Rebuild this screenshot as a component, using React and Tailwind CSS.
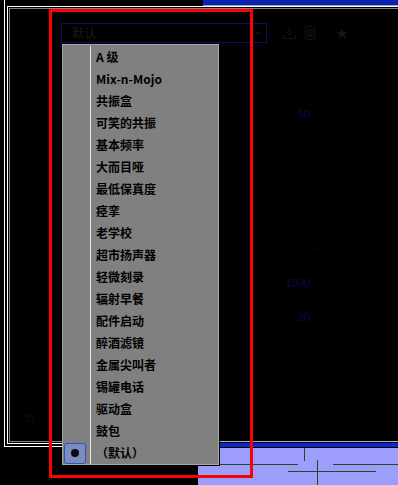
import React from 'react';

const presets = [
  'A 级',
  'Mix-n-Mojo',
  '共振盒',
  '可笑的共振',
  '基本频率',
  '大而目哑',
  '最低保真度',
  '痉挛',
  '老学校',
  '超市扬声器',
  '轻微刻录',
  '辐射早餐',
  '配件启动',
  '醉酒滤镜',
  '金属尖叫者',
  '锡罐电话',
  '驱动盒',
  '鼓包',
  '（默认）',
];

function Chevron({ color = '#2a2a2a' }) {
  return (
    <svg width="7" height="4" viewBox="0 0 7 4" className="block">
      <polyline points="0.5,0.5 3.5,3.5 6.5,0.5" fill="none" stroke={color} strokeWidth="1" />
    </svg>
  );
}

export default function App() {
  return (
    <div className="relative w-[398px] h-[485px] overflow-hidden bg-black font-['Noto_Sans_CJK_SC','Liberation_Sans',sans-serif]">
      {/* title bar of the window behind */}
      <div className="absolute left-[203px] top-0 right-0 h-[6px] bg-[#0b24b0] border-b border-[#9aa0c0]" />

      {/* main window */}
      <div className="absolute left-[4px] top-[-20px] w-[440px] h-[467px] border-l border-b border-white">
        <div className="ml-[2px] mt-[26px] h-[438px] border-l border-t border-b border-white">
          <div className="ml-[1px] mt-[1px] h-[434px] border-l border-t border-b border-[#808080]">
            {/* toolbar */}
            <div className="flex items-center mt-[14px] pl-[51px]">
              <div className="w-[206px] h-[20px] border border-[#0e0e66] flex items-center pl-[10px] pr-[4px]">
                <span className="text-[12px] leading-none text-[#1a1a1a]">默认</span>
                <span className="ml-auto">
                  <Chevron color="#1e1e1e" />
                </span>
              </div>
              <svg width="13" height="12" viewBox="0 0 13 12" className="ml-[16px] block">
                <line x1="6.5" y1="0" x2="6.5" y2="8" stroke="#141414" />
                <polyline points="3.5,5 6.5,8 9.5,5" fill="none" stroke="#141414" />
                <polyline points="0.5,8 0.5,11.5 12.5,11.5 12.5,8" fill="none" stroke="#141414" />
              </svg>
              <svg width="10" height="14" viewBox="0 0 10 14" className="ml-[9px] block">
                <rect x="0.5" y="0.5" width="9" height="13" rx="1" fill="none" stroke="#141414" />
                <line x1="3" y1="3" x2="3" y2="11" stroke="#141414" />
                <line x1="5" y1="3" x2="5" y2="11" stroke="#141414" />
                <line x1="7" y1="3" x2="7" y2="11" stroke="#141414" />
              </svg>
              <svg width="12" height="11" viewBox="0 0 12 11" className="ml-[21px] block">
                <polygon points="6,0 7.5,4 12,4 8.4,6.6 9.7,11 6,8.3 2.3,11 3.6,6.6 0,4 4.5,4" fill="#161616" />
              </svg>
            </div>

            {/* value column */}
            <div className="flex flex-col font-['Liberation_Sans',sans-serif] text-[11px] leading-[14px] text-[#0a0a4c]">
              <div className="mt-[64px] w-[300px] h-[14px] text-right">50</div>
              <div className="mt-[96px] pl-[303px] h-[4px]">
                <Chevron color="#0c0c0c" />
              </div>
              <div className="mt-[26px] pl-[303px] h-[4px]">
                <Chevron color="#0c0c0c" />
              </div>
              <div className="mt-[25px] w-[300px] h-[14px] text-right">1000</div>
              <div className="mt-[20px] w-[300px] h-[14px] text-right">20</div>
              <div className="mt-[87px] pl-[15px] h-[14px] text-[12px] text-[#0e0e0e]">lb</div>
            </div>
          </div>
        </div>
      </div>

      {/* lavender window */}
      <div className="absolute left-[198px] top-[441px] right-0 bottom-0 flex flex-col border-t border-[#b4b4b4]">
        <div className="h-[1px] bg-black" />
        <div className="h-[4px] bg-[#0a2ad0]" />
        <div className="h-[1px] bg-black" />
        <div className="flex-1 bg-[#9d9dfc]">
          <svg width="200" height="37" viewBox="0 0 200 37" className="block">
            <g stroke="#1f4a22" strokeWidth="1">
              <line x1="0" y1="16.5" x2="100" y2="16.5" />
              <line x1="135" y1="16.5" x2="200" y2="16.5" />
              <line x1="106.5" y1="0" x2="106.5" y2="13" />
              <line x1="90" y1="23.5" x2="178" y2="23.5" />
              <line x1="119.5" y1="12" x2="119.5" y2="37" />
            </g>
          </svg>
        </div>
      </div>

      {/* preset menu */}
      <div className="absolute left-[62px] top-[44px] w-[157px] h-[421px] border border-[#a8a8a8] bg-[#808080] shadow-[1px_1px_0_#000] pt-[1px]">
        {presets.map((name, i) => {
          const selected = i === presets.length - 1;
          return (
            <div key={name} className="flex h-[22px]">
              <div className="w-[27px] flex items-center">
                {selected && (
                  <div className="ml-[1px] w-[22px] h-[21px] rounded-[3px] border border-[#2e4fd0] bg-[#7d8dba] flex items-center justify-center">
                    <div className="w-[8px] h-[8px] rounded-full bg-[#0b0b1a]" />
                  </div>
                )}
              </div>
              <div className="flex-1 border-l border-[#e4e4e4] pl-[5px] text-[12px] leading-[22px] font-bold text-black whitespace-nowrap">
                {name}
              </div>
            </div>
          );
        })}
      </div>

      {/* annotation box */}
      <div className="absolute left-[49px] top-[9px] w-[204px] h-[469px] border-[3px] border-[#ff0000] pointer-events-none" />
    </div>
  );
}
